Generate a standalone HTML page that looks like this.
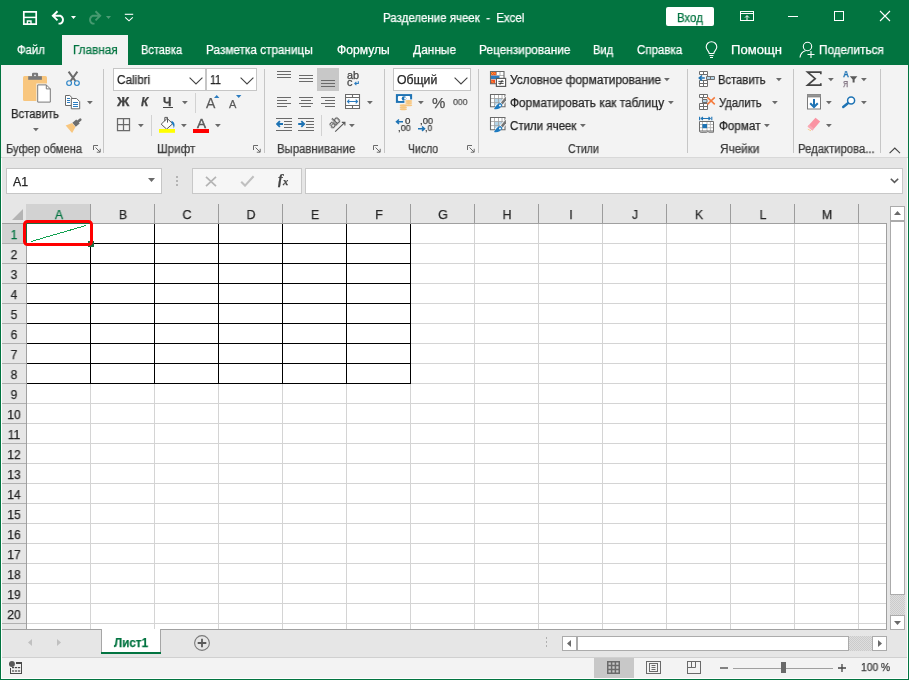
<!DOCTYPE html>
<html lang="ru"><head><meta charset="utf-8"><title>Excel</title><style>
html,body{margin:0;padding:0;}
body{width:909px;height:680px;overflow:hidden;position:relative;background:#e6e6e6;font-family:"Liberation Sans",sans-serif;}
div,svg,span{position:absolute;}
span{-webkit-text-stroke:0.25px;will-change:transform;z-index:2;white-space:pre;line-height:1;transform-origin:0 0;display:block;}
</style></head><body>
<div style="left:0px;top:0px;width:909px;height:680px;background:#027440;"></div>
<div style="left:1px;top:65px;width:907px;height:614px;background:#ffffff;"></div>
<div style="left:1px;top:65px;width:907px;height:92px;background:#f3f3f3;"></div>
<div style="left:1px;top:157px;width:907px;height:1px;background:#d8d8d8;"></div>
<div style="left:62px;top:35px;width:66px;height:30px;background:#f3f3f3;"></div>
<div style="left:2px;top:158px;width:905px;height:499px;background:#e6e6e6;"></div>
<span style="left:383.04px;top:12px;font-size:12px;color:#ffffff;transform:scaleX(0.9575);">Разделение ячеек  -  Excel</span>
<div style="left:666px;top:7px;width:48px;height:19px;background:#ffffff;border-radius:2px;"></div>
<span style="left:676.75px;top:12px;font-size:12px;color:#027440;transform:scaleX(0.9481);">Вход</span>
<span style="left:17.20px;top:44px;font-size:12px;color:#fff;transform:scaleX(0.9448);">Файл</span>
<span style="left:72.72px;top:44px;font-size:12px;color:#027440;transform:scaleX(0.9773);">Главная</span>
<span style="left:141.28px;top:44px;font-size:12px;color:#fff;transform:scaleX(0.9205);">Вставка</span>
<span style="left:205.72px;top:44px;font-size:12px;color:#fff;transform:scaleX(0.9806);">Разметка страницы</span>
<span style="left:336.90px;top:44px;font-size:12px;color:#fff;transform:scaleX(1.0096);">Формулы</span>
<span style="left:413.40px;top:44px;font-size:12px;color:#fff;transform:scaleX(0.9930);">Данные</span>
<span style="left:478.81px;top:44px;font-size:12px;color:#fff;transform:scaleX(0.9859);">Рецензирование</span>
<span style="left:592.97px;top:44px;font-size:12px;color:#fff;transform:scaleX(0.9286);">Вид</span>
<span style="left:636.60px;top:44px;font-size:12px;color:#fff;transform:scaleX(0.9583);">Справка</span>
<span style="left:730.61px;top:44px;font-size:12px;color:#fff;transform:scaleX(1.0889);">Помощн</span>
<span style="left:819.02px;top:44px;font-size:12px;color:#fff;transform:scaleX(0.9769);">Поделиться</span>
<span style="left:5.87px;top:143px;font-size:12px;color:#3c3c3c;transform:scaleX(0.9333);">Буфер обмена</span>
<span style="left:157.03px;top:143px;font-size:12px;color:#3c3c3c;transform:scaleX(0.9667);">Шрифт</span>
<span style="left:276.95px;top:143px;font-size:12px;color:#3c3c3c;transform:scaleX(0.9463);">Выравнивание</span>
<span style="left:408.30px;top:143px;font-size:12px;color:#3c3c3c;transform:scaleX(0.8735);">Число</span>
<span style="left:568.10px;top:143px;font-size:12px;color:#3c3c3c;transform:scaleX(0.8971);">Стили</span>
<span style="left:720.40px;top:143px;font-size:12px;color:#3c3c3c;transform:scaleX(0.9800);">Ячейки</span>
<span style="left:797.96px;top:143px;font-size:12px;color:#3c3c3c;transform:scaleX(0.9413);">Редактирова...</span>
<div style="left:103px;top:69px;width:1px;height:84px;background:#c6c6c6;"></div>
<div style="left:264px;top:69px;width:1px;height:84px;background:#c6c6c6;"></div>
<div style="left:384px;top:69px;width:1px;height:84px;background:#c6c6c6;"></div>
<div style="left:478px;top:69px;width:1px;height:84px;background:#c6c6c6;"></div>
<div style="left:687px;top:69px;width:1px;height:84px;background:#c6c6c6;"></div>
<div style="left:793px;top:69px;width:1px;height:84px;background:#c6c6c6;"></div>
<div style="left:880px;top:69px;width:1px;height:84px;background:#c6c6c6;"></div>
<span style="left:10.86px;top:108px;font-size:12px;color:#262626;transform:scaleX(0.9440);">Вставить</span>
<span style="left:116.60px;top:74px;font-size:12px;color:#262626;transform:scaleX(0.9765);">Calibri</span>
<span style="left:210.00px;top:74px;font-size:12px;color:#262626;transform:scaleX(0.88);">11</span>
<span style="left:397.00px;top:74px;font-size:12px;color:#262626;transform:scaleX(1.0205);">Общий</span>
<span style="left:509.90px;top:74px;font-size:12px;color:#262626;transform:scaleX(0.9895);">Условное форматирование</span>
<span style="left:509.90px;top:97px;font-size:12px;color:#262626;transform:scaleX(0.9866);">Форматировать как таблицу</span>
<span style="left:509.90px;top:120px;font-size:12px;color:#262626;transform:scaleX(0.9586);">Стили ячеек</span>
<span style="left:718.16px;top:74px;font-size:12px;color:#262626;transform:scaleX(0.9360);">Вставить</span>
<span style="left:719.10px;top:97px;font-size:12px;color:#262626;transform:scaleX(0.9304);">Удалить</span>
<span style="left:719.10px;top:120px;font-size:12px;color:#262626;transform:scaleX(0.9721);">Формат</span>
<div style="left:6px;top:168px;width:156px;height:26px;background:#c6c6c6;"></div>
<div style="left:7px;top:169px;width:154px;height:24px;background:#ffffff;"></div>
<span style="left:13.30px;top:176px;font-size:12px;color:#262626;transform:scaleX(1.0333);">A1</span>
<div style="left:192px;top:168px;width:110px;height:26px;background:#c8c8c8;"></div>
<div style="left:193px;top:169px;width:108px;height:24px;background:#f6f6f6;"></div>
<div style="left:305px;top:168px;width:598px;height:26px;background:#c8c8c8;"></div>
<div style="left:306px;top:169px;width:596px;height:24px;background:#ffffff;"></div>
<div style="left:2px;top:204px;width:885px;height:20px;background:#e6e6e6;"></div>
<div style="left:26px;top:204px;width:65px;height:20px;background:#d2d2d2;"></div>
<div style="left:2px;top:224px;width:24px;height:405px;background:#e6e6e6;"></div>
<div style="left:2px;top:224px;width:24px;height:20px;background:#d2d2d2;"></div>
<div style="left:27px;top:224px;width:859px;height:405px;background:#ffffff;"></div>
<div style="left:26px;top:224px;width:1px;height:405px;background:#d4d4d4;"></div>
<div style="left:90px;top:224px;width:1px;height:405px;background:#d4d4d4;"></div>
<div style="left:90px;top:204px;width:1px;height:20px;background:#9c9c9c;"></div>
<div style="left:154px;top:224px;width:1px;height:405px;background:#d4d4d4;"></div>
<div style="left:154px;top:204px;width:1px;height:20px;background:#9c9c9c;"></div>
<div style="left:218px;top:224px;width:1px;height:405px;background:#d4d4d4;"></div>
<div style="left:218px;top:204px;width:1px;height:20px;background:#9c9c9c;"></div>
<div style="left:282px;top:224px;width:1px;height:405px;background:#d4d4d4;"></div>
<div style="left:282px;top:204px;width:1px;height:20px;background:#9c9c9c;"></div>
<div style="left:346px;top:224px;width:1px;height:405px;background:#d4d4d4;"></div>
<div style="left:346px;top:204px;width:1px;height:20px;background:#9c9c9c;"></div>
<div style="left:410px;top:224px;width:1px;height:405px;background:#d4d4d4;"></div>
<div style="left:410px;top:204px;width:1px;height:20px;background:#9c9c9c;"></div>
<div style="left:474px;top:224px;width:1px;height:405px;background:#d4d4d4;"></div>
<div style="left:474px;top:204px;width:1px;height:20px;background:#9c9c9c;"></div>
<div style="left:538px;top:224px;width:1px;height:405px;background:#d4d4d4;"></div>
<div style="left:538px;top:204px;width:1px;height:20px;background:#9c9c9c;"></div>
<div style="left:602px;top:224px;width:1px;height:405px;background:#d4d4d4;"></div>
<div style="left:602px;top:204px;width:1px;height:20px;background:#9c9c9c;"></div>
<div style="left:666px;top:224px;width:1px;height:405px;background:#d4d4d4;"></div>
<div style="left:666px;top:204px;width:1px;height:20px;background:#9c9c9c;"></div>
<div style="left:730px;top:224px;width:1px;height:405px;background:#d4d4d4;"></div>
<div style="left:730px;top:204px;width:1px;height:20px;background:#9c9c9c;"></div>
<div style="left:794px;top:224px;width:1px;height:405px;background:#d4d4d4;"></div>
<div style="left:794px;top:204px;width:1px;height:20px;background:#9c9c9c;"></div>
<div style="left:858px;top:224px;width:1px;height:405px;background:#d4d4d4;"></div>
<div style="left:858px;top:204px;width:1px;height:20px;background:#9c9c9c;"></div>
<div style="left:27px;top:223px;width:859px;height:1px;background:#d4d4d4;"></div>
<div style="left:2px;top:223px;width:24px;height:1px;background:#b0b0b0;"></div>
<div style="left:27px;top:243px;width:859px;height:1px;background:#d4d4d4;"></div>
<div style="left:2px;top:243px;width:24px;height:1px;background:#b0b0b0;"></div>
<div style="left:27px;top:263px;width:859px;height:1px;background:#d4d4d4;"></div>
<div style="left:2px;top:263px;width:24px;height:1px;background:#b0b0b0;"></div>
<div style="left:27px;top:283px;width:859px;height:1px;background:#d4d4d4;"></div>
<div style="left:2px;top:283px;width:24px;height:1px;background:#b0b0b0;"></div>
<div style="left:27px;top:303px;width:859px;height:1px;background:#d4d4d4;"></div>
<div style="left:2px;top:303px;width:24px;height:1px;background:#b0b0b0;"></div>
<div style="left:27px;top:323px;width:859px;height:1px;background:#d4d4d4;"></div>
<div style="left:2px;top:323px;width:24px;height:1px;background:#b0b0b0;"></div>
<div style="left:27px;top:343px;width:859px;height:1px;background:#d4d4d4;"></div>
<div style="left:2px;top:343px;width:24px;height:1px;background:#b0b0b0;"></div>
<div style="left:27px;top:363px;width:859px;height:1px;background:#d4d4d4;"></div>
<div style="left:2px;top:363px;width:24px;height:1px;background:#b0b0b0;"></div>
<div style="left:27px;top:383px;width:859px;height:1px;background:#d4d4d4;"></div>
<div style="left:2px;top:383px;width:24px;height:1px;background:#b0b0b0;"></div>
<div style="left:27px;top:403px;width:859px;height:1px;background:#d4d4d4;"></div>
<div style="left:2px;top:403px;width:24px;height:1px;background:#b0b0b0;"></div>
<div style="left:27px;top:423px;width:859px;height:1px;background:#d4d4d4;"></div>
<div style="left:2px;top:423px;width:24px;height:1px;background:#b0b0b0;"></div>
<div style="left:27px;top:443px;width:859px;height:1px;background:#d4d4d4;"></div>
<div style="left:2px;top:443px;width:24px;height:1px;background:#b0b0b0;"></div>
<div style="left:27px;top:463px;width:859px;height:1px;background:#d4d4d4;"></div>
<div style="left:2px;top:463px;width:24px;height:1px;background:#b0b0b0;"></div>
<div style="left:27px;top:483px;width:859px;height:1px;background:#d4d4d4;"></div>
<div style="left:2px;top:483px;width:24px;height:1px;background:#b0b0b0;"></div>
<div style="left:27px;top:503px;width:859px;height:1px;background:#d4d4d4;"></div>
<div style="left:2px;top:503px;width:24px;height:1px;background:#b0b0b0;"></div>
<div style="left:27px;top:523px;width:859px;height:1px;background:#d4d4d4;"></div>
<div style="left:2px;top:523px;width:24px;height:1px;background:#b0b0b0;"></div>
<div style="left:27px;top:543px;width:859px;height:1px;background:#d4d4d4;"></div>
<div style="left:2px;top:543px;width:24px;height:1px;background:#b0b0b0;"></div>
<div style="left:27px;top:563px;width:859px;height:1px;background:#d4d4d4;"></div>
<div style="left:2px;top:563px;width:24px;height:1px;background:#b0b0b0;"></div>
<div style="left:27px;top:583px;width:859px;height:1px;background:#d4d4d4;"></div>
<div style="left:2px;top:583px;width:24px;height:1px;background:#b0b0b0;"></div>
<div style="left:27px;top:603px;width:859px;height:1px;background:#d4d4d4;"></div>
<div style="left:2px;top:603px;width:24px;height:1px;background:#b0b0b0;"></div>
<div style="left:27px;top:623px;width:859px;height:1px;background:#d4d4d4;"></div>
<div style="left:2px;top:623px;width:24px;height:1px;background:#b0b0b0;"></div>
<div style="left:26px;top:224px;width:1px;height:405px;background:#a0a0a0;"></div>
<div style="left:2px;top:223px;width:885px;height:1px;background:#a0a0a0;"></div>
<div style="left:886px;top:223px;width:1px;height:407px;background:#a0a0a0;"></div>
<div style="left:2px;top:629px;width:885px;height:1px;background:#a0a0a0;"></div>
<span style="left:59.00px;top:208px;font-size:13.5px;color:#027440;transform-origin:50% 0;transform:translateX(-50%) scaleX(0.93);">A</span>
<span style="left:123.00px;top:208px;font-size:13.5px;color:#262626;transform-origin:50% 0;transform:translateX(-50%) scaleX(0.93);">B</span>
<span style="left:187.00px;top:208px;font-size:13.5px;color:#262626;transform-origin:50% 0;transform:translateX(-50%) scaleX(0.93);">C</span>
<span style="left:251.00px;top:208px;font-size:13.5px;color:#262626;transform-origin:50% 0;transform:translateX(-50%) scaleX(0.93);">D</span>
<span style="left:315.00px;top:208px;font-size:13.5px;color:#262626;transform-origin:50% 0;transform:translateX(-50%) scaleX(0.93);">E</span>
<span style="left:379.00px;top:208px;font-size:13.5px;color:#262626;transform-origin:50% 0;transform:translateX(-50%) scaleX(0.93);">F</span>
<span style="left:443.00px;top:208px;font-size:13.5px;color:#262626;transform-origin:50% 0;transform:translateX(-50%) scaleX(0.93);">G</span>
<span style="left:507.00px;top:208px;font-size:13.5px;color:#262626;transform-origin:50% 0;transform:translateX(-50%) scaleX(0.93);">H</span>
<span style="left:571.00px;top:208px;font-size:13.5px;color:#262626;transform-origin:50% 0;transform:translateX(-50%) scaleX(0.93);">I</span>
<span style="left:635.00px;top:208px;font-size:13.5px;color:#262626;transform-origin:50% 0;transform:translateX(-50%) scaleX(0.93);">J</span>
<span style="left:699.00px;top:208px;font-size:13.5px;color:#262626;transform-origin:50% 0;transform:translateX(-50%) scaleX(0.93);">K</span>
<span style="left:763.00px;top:208px;font-size:13.5px;color:#262626;transform-origin:50% 0;transform:translateX(-50%) scaleX(0.93);">L</span>
<span style="left:827.00px;top:208px;font-size:13.5px;color:#262626;transform-origin:50% 0;transform:translateX(-50%) scaleX(0.93);">M</span>
<span style="left:13.70px;top:228px;font-size:13px;color:#027440;transform-origin:50% 0;transform:translateX(-50%) scaleX(0.93);">1</span>
<span style="left:13.70px;top:248px;font-size:13px;color:#262626;transform-origin:50% 0;transform:translateX(-50%) scaleX(0.93);">2</span>
<span style="left:13.70px;top:268px;font-size:13px;color:#262626;transform-origin:50% 0;transform:translateX(-50%) scaleX(0.93);">3</span>
<span style="left:13.70px;top:288px;font-size:13px;color:#262626;transform-origin:50% 0;transform:translateX(-50%) scaleX(0.93);">4</span>
<span style="left:13.70px;top:308px;font-size:13px;color:#262626;transform-origin:50% 0;transform:translateX(-50%) scaleX(0.93);">5</span>
<span style="left:13.70px;top:328px;font-size:13px;color:#262626;transform-origin:50% 0;transform:translateX(-50%) scaleX(0.93);">6</span>
<span style="left:13.70px;top:348px;font-size:13px;color:#262626;transform-origin:50% 0;transform:translateX(-50%) scaleX(0.93);">7</span>
<span style="left:13.70px;top:368px;font-size:13px;color:#262626;transform-origin:50% 0;transform:translateX(-50%) scaleX(0.93);">8</span>
<span style="left:13.70px;top:388px;font-size:13px;color:#262626;transform-origin:50% 0;transform:translateX(-50%) scaleX(0.93);">9</span>
<span style="left:13.70px;top:408px;font-size:13px;color:#262626;transform-origin:50% 0;transform:translateX(-50%) scaleX(0.93);">10</span>
<span style="left:13.70px;top:428px;font-size:13px;color:#262626;transform-origin:50% 0;transform:translateX(-50%) scaleX(0.93);">11</span>
<span style="left:13.70px;top:448px;font-size:13px;color:#262626;transform-origin:50% 0;transform:translateX(-50%) scaleX(0.93);">12</span>
<span style="left:13.70px;top:468px;font-size:13px;color:#262626;transform-origin:50% 0;transform:translateX(-50%) scaleX(0.93);">13</span>
<span style="left:13.70px;top:488px;font-size:13px;color:#262626;transform-origin:50% 0;transform:translateX(-50%) scaleX(0.93);">14</span>
<span style="left:13.70px;top:508px;font-size:13px;color:#262626;transform-origin:50% 0;transform:translateX(-50%) scaleX(0.93);">15</span>
<span style="left:13.70px;top:528px;font-size:13px;color:#262626;transform-origin:50% 0;transform:translateX(-50%) scaleX(0.93);">16</span>
<span style="left:13.70px;top:548px;font-size:13px;color:#262626;transform-origin:50% 0;transform:translateX(-50%) scaleX(0.93);">17</span>
<span style="left:13.70px;top:568px;font-size:13px;color:#262626;transform-origin:50% 0;transform:translateX(-50%) scaleX(0.93);">18</span>
<span style="left:13.70px;top:588px;font-size:13px;color:#262626;transform-origin:50% 0;transform:translateX(-50%) scaleX(0.93);">19</span>
<span style="left:13.70px;top:608px;font-size:13px;color:#262626;transform-origin:50% 0;transform:translateX(-50%) scaleX(0.93);">20</span>
<div style="left:90px;top:224px;width:1px;height:160px;background:#000;"></div>
<div style="left:154px;top:224px;width:1px;height:160px;background:#000;"></div>
<div style="left:218px;top:224px;width:1px;height:160px;background:#000;"></div>
<div style="left:282px;top:224px;width:1px;height:160px;background:#000;"></div>
<div style="left:346px;top:224px;width:1px;height:160px;background:#000;"></div>
<div style="left:410px;top:224px;width:1px;height:160px;background:#000;"></div>
<div style="left:27px;top:243px;width:384px;height:1px;background:#000;"></div>
<div style="left:27px;top:263px;width:384px;height:1px;background:#000;"></div>
<div style="left:27px;top:283px;width:384px;height:1px;background:#000;"></div>
<div style="left:27px;top:303px;width:384px;height:1px;background:#000;"></div>
<div style="left:27px;top:323px;width:384px;height:1px;background:#000;"></div>
<div style="left:27px;top:343px;width:384px;height:1px;background:#000;"></div>
<div style="left:27px;top:363px;width:384px;height:1px;background:#000;"></div>
<div style="left:27px;top:383px;width:384px;height:1px;background:#000;"></div>
<svg style="left:11px;top:208px;" width="13" height="13" viewBox="0 0 13 13"><path d="M12 1V12H1Z" fill="#b4b4b4"/></svg>
<svg style="left:27px;top:224px;" width="63" height="19" viewBox="0 0 63 19"><path d="M4 17.5L59 1.5" stroke="#12a150" stroke-width="1" fill="none" shape-rendering="crispEdges"/></svg>
<div style="left:26px;top:223px;width:65px;height:1px;background:#1b6e43;"></div>
<div style="left:26px;top:223px;width:1px;height:21px;background:#1b6e43;"></div>
<div style="left:88px;top:241px;width:6px;height:6px;background:#1b6e43;"></div>
<div style="left:23px;top:220px;width:64px;height:20px;border:3px solid #ff0000;border-radius:4.5px;"></div>
<div style="left:2px;top:630px;width:905px;height:27px;background:#e6e6e6;"></div>
<div style="left:2px;top:657px;width:905px;height:1px;background:#d0d0d0;"></div>
<div style="left:2px;top:658px;width:905px;height:20px;background:#f3f3f3;"></div>
<div style="left:101px;top:629px;width:60px;height:23px;background:#a6a6a6;"></div>
<div style="left:102px;top:629px;width:58px;height:23px;background:#ffffff;"></div>
<div style="left:101px;top:652px;width:60px;height:2px;background:#027440;"></div>
<span style="left:113.80px;top:636px;font-size:13.5px;color:#027440;font-weight:bold;transform:scaleX(0.8625);">Лист1</span>
<svg style="left:28px;top:639px;" width="4" height="7" viewBox="0 0 4 7"><path d="M4 0L0 3.5L4 7Z" fill="#c0c0c0"/></svg>
<svg style="left:57px;top:639px;" width="4" height="7" viewBox="0 0 4 7"><path d="M0 0L4 3.5L0 7Z" fill="#c0c0c0"/></svg>
<svg style="left:193px;top:634px;" width="18" height="18" viewBox="0 0 18 18"><circle cx="9" cy="9" r="7.4" fill="none" stroke="#7a7a7a" stroke-width="1.1"/><path d="M4.7 9H13.3M9 4.7V13.3" stroke="#5a5a5a" stroke-width="1.8"/></svg>
<svg style="left:9px;top:661px;" width="14" height="14" viewBox="0 0 14 14"><circle cx="2.9" cy="3.1" r="3" fill="#5a5a5a"/><g fill="#4a4a4a"><rect x="7" y="1" width="6" height="2"/><rect x="12" y="1" width="1" height="12"/><rect x="1" y="12" width="12" height="1"/><rect x="1" y="7" width="1" height="6"/><rect x="3" y="6" width="2.2" height="1.2"/><rect x="6" y="6" width="2.2" height="1.2"/><rect x="9" y="6" width="2.2" height="1.2"/><rect x="3" y="9.4" width="2.2" height="1.2"/><rect x="6" y="9.4" width="2.2" height="1.2"/><rect x="9" y="9.4" width="2.2" height="1.2"/></g></svg>
<div style="left:546px;top:637px;width:1px;height:2px;background:#b0b0b0;"></div>
<div style="left:546px;top:641px;width:1px;height:2px;background:#b0b0b0;"></div>
<div style="left:546px;top:645px;width:1px;height:2px;background:#b0b0b0;"></div>
<div style="left:562px;top:636px;width:15px;height:15px;background:#ababab;"></div>
<div style="left:563px;top:637px;width:13px;height:13px;background:#ffffff;"></div>
<div style="left:577px;top:636px;width:272px;height:15px;background:#ababab;"></div>
<div style="left:578px;top:637px;width:270px;height:13px;background:#ffffff;"></div>
<div style="left:849px;top:636px;width:23px;height:15px;background:#d3d3d3;background-image:conic-gradient(#cbcbcb 25%,#dedede 0 50%,#cbcbcb 0 75%,#dedede 0);background-size:2px 2px;"></div>
<div style="left:872px;top:636px;width:15px;height:15px;background:#ababab;"></div>
<div style="left:873px;top:637px;width:13px;height:13px;background:#ffffff;"></div>
<svg style="left:567px;top:640px;" width="4" height="7" viewBox="0 0 4 7"><path d="M4 0L0 3.5L4 7Z" fill="#6a6a6a"/></svg>
<svg style="left:878px;top:640px;" width="4" height="7" viewBox="0 0 4 7"><path d="M0 0L4 3.5L0 7Z" fill="#6a6a6a"/></svg>
<div style="left:890px;top:206px;width:15px;height:15px;background:#ababab;"></div>
<div style="left:891px;top:207px;width:13px;height:13px;background:#ffffff;"></div>
<div style="left:890px;top:221px;width:15px;height:374px;background:#ababab;"></div>
<div style="left:891px;top:222px;width:13px;height:372px;background:#ffffff;"></div>
<div style="left:890px;top:595px;width:15px;height:20px;background:#d3d3d3;background-image:conic-gradient(#cbcbcb 25%,#dedede 0 50%,#cbcbcb 0 75%,#dedede 0);background-size:2px 2px;"></div>
<div style="left:890px;top:615px;width:15px;height:15px;background:#ababab;"></div>
<div style="left:891px;top:616px;width:13px;height:13px;background:#ffffff;"></div>
<svg style="left:894px;top:211px;" width="7" height="4" viewBox="0 0 7 4"><path d="M0 4L3.5 0L7 4Z" fill="#6a6a6a"/></svg>
<svg style="left:894px;top:621px;" width="7" height="4" viewBox="0 0 7 4"><path d="M0 0L3.5 4L7 0Z" fill="#6a6a6a"/></svg>
<div style="left:594px;top:658px;width:40px;height:20px;background:#c8c8c8;"></div>
<svg style="left:607px;top:661px;" width="13" height="13" viewBox="0 0 13 13"><path d="M0.75 0.75H12.25V12.25H0.75ZM0.75 4.6H12.25M0.75 8.4H12.25M4.6 0.75V12.25M8.4 0.75V12.25" fill="none" stroke="#6a6a6a" stroke-width="1.5"/></svg>
<svg style="left:646px;top:661px;" width="15" height="13" viewBox="0 0 15 13"><rect x="0.5" y="0.5" width="14" height="12" fill="none" stroke="#6a6a6a"/><rect x="3.5" y="2.5" width="8" height="8" fill="none" stroke="#6a6a6a"/><path d="M5.5 4.5H9.5M5.5 6.5H9.5M5.5 8.5H9.5" stroke="#6a6a6a" stroke-width="1"/></svg>
<svg style="left:687px;top:661px;" width="14" height="13" viewBox="0 0 14 13"><rect x="0.5" y="0.5" width="13" height="12" fill="none" stroke="#6a6a6a"/><path d="M0.5 6.5H8.5V0.5M4.5 0.5V6.5" fill="none" stroke="#6a6a6a"/></svg>
<svg style="left:719px;top:663px;" width="10" height="10" viewBox="0 0 10 10"><path d="M1 5H9" stroke="#444" stroke-width="1.3" fill="none"/></svg>
<div style="left:733px;top:668px;width:100px;height:1px;background:#a0a0a0;"></div>
<div style="left:781px;top:662px;width:5px;height:11px;background:#6a6a6a;"></div>
<svg style="left:837px;top:663px;" width="10" height="10" viewBox="0 0 10 10"><path d="M1 5H9M5 1V9" stroke="#444" stroke-width="1.3" fill="none"/></svg>
<span style="left:860.50px;top:662px;font-size:10.7px;color:#3a3a3a;transform:scaleX(0.9600);">100 %</span>
<svg style="left:22px;top:10px;" width="16" height="16" viewBox="0 0 16 16"><path d="M1.8 1.8H14.2V14.2H1.8Z" fill="none" stroke="#fff" stroke-width="1.7"/><path d="M1.8 7.4H14.2" stroke="#fff" stroke-width="1.5"/><path d="M5.4 14.2V11H9V14.2" fill="none" stroke="#fff" stroke-width="1.4"/></svg>
<svg style="left:51px;top:10px;" width="16" height="15" viewBox="0 0 16 15"><path d="M6.5 1.2 L1.8 5.8 L6.5 10.4 M1.8 5.8 H9.5 A4.3 4.3 0 0 1 9.5 13.6 H7.5" fill="none" stroke="#fff" stroke-width="1.9"/></svg>
<svg style="left:71px;top:16px;" width="5" height="3" viewBox="0 0 5 3"><path d="M0 0H5L2.5 3Z" fill="#fff"/></svg>
<svg style="left:86px;top:10px;" width="16" height="15" viewBox="0 0 16 15"><path d="M9.5 1.2 L14.2 5.8 L9.5 10.4 M14.2 5.8 H6.5 A4.3 4.3 0 0 0 6.5 13.6 H8.5" fill="none" stroke="#469a70" stroke-width="1.9"/></svg>
<svg style="left:106px;top:16px;" width="5" height="3" viewBox="0 0 5 3"><path d="M0 0H5L2.5 3Z" fill="#4f9c76"/></svg>
<svg style="left:124px;top:13px;" width="10" height="9" viewBox="0 0 10 9"><path d="M0.8 1.3H9.2" stroke="#fff" stroke-width="1.1"/><path d="M1.2 4.3L5 7.8L8.8 4.3" fill="none" stroke="#fff" stroke-width="1.1"/></svg>
<svg style="left:740px;top:11px;" width="14" height="10" viewBox="0 0 14 10"><rect x="0.5" y="0.5" width="13" height="9" fill="none" stroke="#fff"/><path d="M0.5 2.5H13.5" stroke="#fff"/><path d="M7 9.5V4.8M5 6.6L7 4.6L9 6.6" fill="none" stroke="#fff"/></svg>
<div style="left:788px;top:16px;width:10px;height:1px;background:#fff;"></div>
<div style="left:834px;top:11px;width:10px;height:10px;border:1px solid #fff;box-sizing:border-box;"></div>
<svg style="left:879px;top:10px;" width="12" height="12" viewBox="0 0 12 12"><path d="M1 1L11 11M11 1L1 11" stroke="#fff" stroke-width="1.1"/></svg>
<svg style="left:705px;top:41px;" width="13" height="18" viewBox="0 0 13 18"><path d="M4.2 12.5 C4.2 10 1.2 9 1.2 6 A5.3 5.3 0 0 1 11.8 6 C11.8 9 8.8 10 8.8 12.5 Z" fill="none" stroke="#fff" stroke-width="1.1"/><path d="M4.5 14.5H8.5M5 16.5H8" stroke="#fff" stroke-width="1.1"/></svg>
<svg style="left:799px;top:41px;" width="17" height="18" viewBox="0 0 17 18"><circle cx="8.5" cy="5.5" r="4.2" fill="none" stroke="#fff" stroke-width="1.1"/><path d="M1 16.5 C1.5 12.5 4 10.5 6.5 9.8" fill="none" stroke="#fff" stroke-width="1.1"/><path d="M8.5 13.5H15.5M12 10V17" stroke="#fff" stroke-width="1.1"/></svg>
<svg style="left:22px;top:72px;" width="30" height="32" viewBox="0 0 30 32"><rect x="1" y="4" width="24" height="25" rx="1.5" fill="#f8c67e"/><rect x="6.2" y="4.2" width="13.7" height="3.6" fill="#797979"/><rect x="10" y="0.8" width="6.1" height="4.5" rx="1.2" fill="#797979"/><circle cx="13" cy="3.3" r="0.9" fill="#f3f3f3"/><path d="M14.4 11.6H25L29.4 16V31.2H14.4Z" fill="#f3f3f3"/><path d="M15.7 12.9H24.3L28.3 16.9V30.1H15.7Z" fill="#fff" stroke="#7a7a7a" stroke-width="1"/><path d="M24.3 12.9V16.9H28.3" fill="none" stroke="#7a7a7a" stroke-width="1"/></svg>
<svg style="left:32.6px;top:128px;" width="6" height="4" viewBox="0 0 6 4"><path d="M0 0H5.8L2.9 3.3Z" fill="#6a6a6a"/></svg>
<svg style="left:65px;top:71px;" width="16" height="16" viewBox="0 0 16 16"><path d="M3.6 0.6L10.4 10M12.4 0.6L5.6 10" stroke="#6a6a6a" stroke-width="2" fill="none"/><circle cx="4.1" cy="12.1" r="2.4" fill="#f3f3f3" stroke="#2e86c8" stroke-width="1.15"/><circle cx="11.9" cy="12.1" r="2.4" fill="#f3f3f3" stroke="#2e86c8" stroke-width="1.15"/></svg>
<svg style="left:64px;top:94px;" width="17" height="16" viewBox="0 0 17 16"><path d="M1.5 1.5H5.8L8 3.7V11.5H1.5Z" fill="#fff" stroke="#6a6a6a"/><path d="M3 4.5H6M3 6.5H6M3 8.5H6" stroke="#2b7cc0"/><path d="M7.3 4.5H12.6L15.7 7.6V14.8H7.3Z" fill="#fff" stroke="#6a6a6a"/><path d="M9 8.5H14M9 10.5H14M9 12.5H14" stroke="#2b7cc0"/></svg>
<svg style="left:86.6px;top:101px;" width="6" height="4" viewBox="0 0 6 4"><path d="M0 0H5.8L2.9 3.3Z" fill="#6a6a6a"/></svg>
<svg style="left:64px;top:118px;" width="18" height="17" viewBox="0 0 18 17"><path d="M8.1 5.1L11.5 9.1L8.1 15.1L1.7 7.5Z" fill="#f8c67e"/><path d="M15.7 5.5L12.3 1.5L8.4 4.8L11.8 8.8Z" fill="#6e6e6e"/><path d="M13.2 4.2L16.2 1.7" stroke="#6e6e6e" stroke-width="2.6" stroke-linecap="round"/></svg>
<div style="left:113px;top:68px;width:93px;height:23px;background:#c6c6c6;"></div>
<div style="left:114px;top:69px;width:91px;height:21px;background:#ffffff;"></div>
<div style="left:206px;top:68px;width:51px;height:23px;background:#c6c6c6;"></div>
<div style="left:207px;top:69px;width:49px;height:21px;background:#ffffff;"></div>
<svg style="left:189px;top:76.5px;" width="14" height="8" viewBox="0 0 14 8"><path d="M0.6 0.6L7.0 7L13.4 0.6" fill="none" stroke="#444444" stroke-width="1.1"/></svg>
<svg style="left:239.5px;top:76.5px;" width="14" height="8" viewBox="0 0 14 8"><path d="M0.6 0.6L7.0 7L13.4 0.6" fill="none" stroke="#444444" stroke-width="1.1"/></svg>
<span style="left:117.30px;top:96px;font-size:12px;color:#444444;font-weight:bold;transform:scaleX(1.14);">Ж</span>
<span style="left:140.90px;top:96px;font-size:12px;color:#444444;font-weight:bold;font-style:italic;">К</span>
<span style="left:163.30px;top:96px;font-size:12px;color:#444444;font-weight:bold;">Ч</span>
<div style="left:163px;top:107px;width:10px;height:1px;background:#444444;"></div>
<svg style="left:181.6px;top:101px;" width="6" height="4" viewBox="0 0 6 4"><path d="M0 0H5.8L2.9 3.3Z" fill="#6a6a6a"/></svg>
<div style="left:195px;top:93px;width:1px;height:20px;background:#d2d2d2;"></div>
<span style="left:205.60px;top:96px;font-size:14px;color:#5a5a5a;">A</span>
<svg style="left:214px;top:95px;" width="6" height="3" viewBox="0 0 6 3"><path d="M0 3H5.4L2.7 0Z" fill="#2b7cc0"/></svg>
<span style="left:228.60px;top:99px;font-size:11px;color:#5a5a5a;">A</span>
<svg style="left:236px;top:95px;" width="6" height="3" viewBox="0 0 6 3"><path d="M0 0H5.4L2.7 3Z" fill="#2b7cc0"/></svg>
<svg style="left:116px;top:117px;" width="15" height="15" viewBox="0 0 15 15"><path d="M1.5 1.5H13.5V13.5H1.5ZM7.5 1.5V13.5M1.5 7.5H13.5" fill="none" stroke="#6a6a6a" stroke-width="1.25"/></svg>
<svg style="left:137.6px;top:124px;" width="6" height="4" viewBox="0 0 6 4"><path d="M0 0H5.8L2.9 3.3Z" fill="#6a6a6a"/></svg>
<div style="left:151px;top:115px;width:1px;height:21px;background:#d2d2d2;"></div>
<svg style="left:158px;top:116px;" width="18" height="17" viewBox="0 0 18 17"><path d="M9.1 2.4L14.7 7.7L8.6 13.1L3.2 8.2Z" fill="#fff" stroke="#5a5a5a" stroke-width="1"/><path d="M6.8 5.2V1.4H9.5V6.6" fill="none" stroke="#5a5a5a" stroke-width="1"/><path d="M13.4 4.8C16.6 5.8 17.4 9 15.7 12.6C15.7 10.2 15.2 8.6 13.6 7.4Z" fill="#1e7bc0"/><rect x="1" y="13" width="16" height="3.8" fill="#ffff00"/></svg>
<svg style="left:180.6px;top:124px;" width="6" height="4" viewBox="0 0 6 4"><path d="M0 0H5.8L2.9 3.3Z" fill="#6a6a6a"/></svg>
<span style="left:196.60px;top:117px;font-size:13.5px;color:#5a5a5a;-webkit-text-stroke:0.5px;">A</span>
<div style="left:193px;top:129px;width:16px;height:4px;background:#ff0000;"></div>
<svg style="left:214.6px;top:124px;" width="6" height="4" viewBox="0 0 6 4"><path d="M0 0H5.8L2.9 3.3Z" fill="#6a6a6a"/></svg>
<div style="left:277px;top:71px;width:14px;height:1px;background:#6a6a6a;"></div>
<div style="left:277px;top:74px;width:14px;height:1px;background:#6a6a6a;"></div>
<div style="left:277px;top:77px;width:14px;height:1px;background:#6a6a6a;"></div>
<div style="left:299px;top:75px;width:14px;height:1px;background:#6a6a6a;"></div>
<div style="left:299px;top:78px;width:14px;height:1px;background:#6a6a6a;"></div>
<div style="left:299px;top:81px;width:14px;height:1px;background:#6a6a6a;"></div>
<div style="left:317px;top:68px;width:22px;height:23px;background:#c8c8c8;"></div>
<div style="left:321px;top:80px;width:14px;height:1px;background:#6a6a6a;"></div>
<div style="left:321px;top:83px;width:14px;height:1px;background:#6a6a6a;"></div>
<div style="left:321px;top:86px;width:14px;height:1px;background:#6a6a6a;"></div>
<span style="left:347.10px;top:70px;font-size:10.5px;color:#444444;transform:scaleX(1.0333);">ab</span>
<span style="left:347.10px;top:77px;font-size:10.5px;color:#444444;transform:scaleX(1.0400);">c</span>
<svg style="left:353.6px;top:80.8px;" width="5" height="5" viewBox="0 0 5 5"><path d="M4.3 0.3V2.5H1M2.4 0.9L0.8 2.5L2.4 4.1" fill="none" stroke="#2b7cc0" stroke-width="1.1"/></svg>
<div style="left:277px;top:97px;width:14px;height:1px;background:#6a6a6a;"></div>
<div style="left:277px;top:100px;width:10px;height:1px;background:#6a6a6a;"></div>
<div style="left:277px;top:103px;width:14px;height:1px;background:#6a6a6a;"></div>
<div style="left:277px;top:106px;width:10px;height:1px;background:#6a6a6a;"></div>
<div style="left:299.0px;top:97px;width:14px;height:1px;background:#6a6a6a;"></div>
<div style="left:301.0px;top:100px;width:10px;height:1px;background:#6a6a6a;"></div>
<div style="left:299.0px;top:103px;width:14px;height:1px;background:#6a6a6a;"></div>
<div style="left:301.0px;top:106px;width:10px;height:1px;background:#6a6a6a;"></div>
<div style="left:321px;top:97px;width:14px;height:1px;background:#6a6a6a;"></div>
<div style="left:325px;top:100px;width:10px;height:1px;background:#6a6a6a;"></div>
<div style="left:321px;top:103px;width:14px;height:1px;background:#6a6a6a;"></div>
<div style="left:325px;top:106px;width:10px;height:1px;background:#6a6a6a;"></div>
<svg style="left:345px;top:94px;" width="16" height="15" viewBox="0 0 16 15"><path d="M0.5 0.5H14.5V14.5H0.5ZM0.5 3.5H14.5M0.5 11.5H14.5M7.5 0.5V3.5M7.5 11.5V14.5" fill="#fff" stroke="#6a6a6a" stroke-width="1.1"/><path d="M2.5 7.5H12.5M4.3 5.7L2.5 7.5L4.3 9.3M10.7 5.7L12.5 7.5L10.7 9.3" fill="none" stroke="#2b7cc0" stroke-width="1.1"/></svg>
<svg style="left:366.6px;top:101px;" width="6" height="4" viewBox="0 0 6 4"><path d="M0 0H5.8L2.9 3.3Z" fill="#6a6a6a"/></svg>
<div style="left:276px;top:118px;width:16px;height:1px;background:#6a6a6a;"></div>
<div style="left:276px;top:130px;width:16px;height:1px;background:#6a6a6a;"></div>
<div style="left:284px;top:121px;width:8px;height:1px;background:#6a6a6a;"></div>
<div style="left:284px;top:124px;width:8px;height:1px;background:#6a6a6a;"></div>
<div style="left:284px;top:127px;width:8px;height:1px;background:#6a6a6a;"></div>
<svg style="left:276px;top:120px;" width="8" height="8" viewBox="0 0 8 8"><path d="M7 4H1.4M3.9 1.1L1 4L3.9 6.9" fill="none" stroke="#1e73b4" stroke-width="1.8"/></svg>
<div style="left:298px;top:118px;width:16px;height:1px;background:#6a6a6a;"></div>
<div style="left:298px;top:130px;width:16px;height:1px;background:#6a6a6a;"></div>
<div style="left:306px;top:121px;width:8px;height:1px;background:#6a6a6a;"></div>
<div style="left:306px;top:124px;width:8px;height:1px;background:#6a6a6a;"></div>
<div style="left:306px;top:127px;width:8px;height:1px;background:#6a6a6a;"></div>
<svg style="left:298px;top:120px;" width="8" height="8" viewBox="0 0 8 8"><path d="M0.2 4H5.8M3.3 1.1L6.2 4L3.3 6.9" fill="none" stroke="#1e73b4" stroke-width="1.8"/></svg>
<div style="left:321px;top:115px;width:1px;height:21px;background:#d2d2d2;"></div>
<span style="left:332.60px;top:120px;font-size:11.5px;color:#505050;transform-origin:0 0.8465em;transform:rotate(-45deg);letter-spacing:-0.3px;">ab</span>
<svg style="left:333px;top:120px;" width="14" height="13" viewBox="0 0 14 13"><path d="M2.2 11.6L11.6 2.6M8.8 2.4H11.9V5.5" fill="none" stroke="#5a5a5a" stroke-width="1.15"/></svg>
<svg style="left:348.6px;top:124px;" width="6" height="4" viewBox="0 0 6 4"><path d="M0 0H5.8L2.9 3.3Z" fill="#6a6a6a"/></svg>
<svg style="left:93px;top:145px;" width="8" height="8" viewBox="0 0 8 8"><path d="M0.5 5V0.5H5" fill="none" stroke="#6a6a6a" stroke-width="1"/><path d="M2.5 2.5L7 7M7.2 3.8V7.2H3.8" fill="none" stroke="#6a6a6a" stroke-width="1"/></svg>
<svg style="left:253px;top:145px;" width="8" height="8" viewBox="0 0 8 8"><path d="M0.5 5V0.5H5" fill="none" stroke="#6a6a6a" stroke-width="1"/><path d="M2.5 2.5L7 7M7.2 3.8V7.2H3.8" fill="none" stroke="#6a6a6a" stroke-width="1"/></svg>
<svg style="left:373px;top:145px;" width="8" height="8" viewBox="0 0 8 8"><path d="M0.5 5V0.5H5" fill="none" stroke="#6a6a6a" stroke-width="1"/><path d="M2.5 2.5L7 7M7.2 3.8V7.2H3.8" fill="none" stroke="#6a6a6a" stroke-width="1"/></svg>
<svg style="left:467px;top:145px;" width="8" height="8" viewBox="0 0 8 8"><path d="M0.5 5V0.5H5" fill="none" stroke="#6a6a6a" stroke-width="1"/><path d="M2.5 2.5L7 7M7.2 3.8V7.2H3.8" fill="none" stroke="#6a6a6a" stroke-width="1"/></svg>
<div style="left:393px;top:68px;width:78px;height:23px;background:#c6c6c6;"></div>
<div style="left:394px;top:69px;width:76px;height:21px;background:#ffffff;"></div>
<svg style="left:453.5px;top:76.5px;" width="14" height="8" viewBox="0 0 14 8"><path d="M0.6 0.6L7.0 7L13.4 0.6" fill="none" stroke="#444444" stroke-width="1.1"/></svg>
<svg style="left:395px;top:93px;" width="18" height="18" viewBox="0 0 18 18"><rect x="0.9" y="1.1" width="16.2" height="8.8" fill="#1e73b4"/><rect x="2.9" y="3" width="12.2" height="5" rx="1" fill="#fff"/><circle cx="9" cy="5.5" r="2.3" fill="#1e73b4"/><circle cx="10.1" cy="5.3" r="1" fill="#fff"/><rect x="9.4" y="6.4" width="8.6" height="7.6" fill="#f3f3f3"/><g fill="#f8c67e"><ellipse cx="13.7" cy="8" rx="3.5" ry="1.05"/><ellipse cx="13.7" cy="10.1" rx="3.5" ry="1.05"/><ellipse cx="13.7" cy="12.2" rx="3.5" ry="1.05"/><ellipse cx="8.3" cy="12.4" rx="3.6" ry="1.05"/><ellipse cx="8.3" cy="14.4" rx="3.6" ry="1.05"/><ellipse cx="8.3" cy="16.3" rx="3.6" ry="1.05"/></g></svg>
<svg style="left:417.6px;top:101px;" width="6" height="4" viewBox="0 0 6 4"><path d="M0 0H5.8L2.9 3.3Z" fill="#6a6a6a"/></svg>
<span style="left:432.30px;top:95px;font-size:15px;color:#505050;">%</span>
<span style="left:452.90px;top:97px;font-size:9.4px;color:#505050;transform:scaleX(0.9250);">000</span>
<svg style="left:395px;top:118px;" width="9" height="8" viewBox="0 0 9 8"><path d="M8 3.7H1.8M4 1.5L1.5 3.7L4 5.9" fill="none" stroke="#1e73b4" stroke-width="1.5"/></svg>
<span style="left:405.40px;top:116px;font-size:9.6px;color:#3a3a3a;transform:scaleX(1.0200);">0</span>
<span style="left:398.10px;top:123px;font-size:9.6px;color:#3a3a3a;transform:scaleX(0.9538);">,00</span>
<span style="left:419.80px;top:116px;font-size:9.6px;color:#3a3a3a;transform:scaleX(0.9769);">,00</span>
<svg style="left:417px;top:125px;" width="9" height="8" viewBox="0 0 9 8"><path d="M1 3.7H7.2M5 1.5L7.5 3.7L5 5.9" fill="none" stroke="#1e73b4" stroke-width="1.5"/></svg>
<span style="left:425.30px;top:123px;font-size:9.6px;color:#3a3a3a;transform:scaleX(0.9000);">,0</span>
<svg style="left:489px;top:70px;" width="18" height="18" viewBox="0 0 18 18"><rect x="1.5" y="1.5" width="13.5" height="12.3" fill="#fff"/><rect x="1.5" y="1.5" width="6" height="4" fill="#f04e23"/><path d="M2.2 2.2L4.4 4.4M4.6 2.2L6.8 4.4M2.2 4.4L3 5.2" stroke="#fbbf3c" stroke-width="0.9"/><rect x="1.5" y="5.6" width="9" height="3.6" fill="#2b7cc0"/><rect x="1.5" y="9.6" width="4.6" height="4.2" fill="#f04e23"/><path d="M2.2 10.6L4.4 12.8" stroke="#fbbf3c" stroke-width="0.9"/><path d="M7.5 1.5V5.5M11 1.5V5.5M7.5 5.5H15" fill="none" stroke="#a0a0a0" stroke-width="0.8"/><path d="M1.5 1.5H15V13.8H1.5Z" fill="none" stroke="#6a6a6a" stroke-width="1.1"/><rect x="7.4" y="8.4" width="9.2" height="8" fill="#fff" stroke="#5a5a5a" stroke-width="1.2"/><path d="M9.4 11.4H14.6M9.4 13.4H14.6M13.3 10L10.9 14.8" stroke="#333" stroke-width="0.9" fill="none"/></svg>
<svg style="left:489px;top:93px;" width="18" height="18" viewBox="0 0 18 18"><rect x="1.5" y="1.5" width="14.5" height="12.3" fill="#fff"/><rect x="5.5" y="5.5" width="8" height="6.5" fill="#b5d5e8"/><path d="M1.5 5.5H16M1.5 9.6H16M5.5 1.5V13.8M9.5 1.5V13.8M13 1.5V13.8" fill="none" stroke="#a0a0a0" stroke-width="0.8"/><path d="M1.5 1.5H16V13.8H1.5Z" fill="none" stroke="#6a6a6a" stroke-width="1.1"/><path d="M8 10L13 17.8H4Z" fill="#f3f3f3"/><path d="M10.8 9.2L17.6 1.8V8.4L13.2 13Z" fill="#f3f3f3"/><path d="M12 9.6L16.8 3.4L17 7.2L13.6 11.6Z" fill="#757575"/><path d="M11.6 10C9.6 10.2 7.4 11.6 5 16C8.4 16.8 11.8 15.4 13.4 12Z" fill="#1e7bc0"/><circle cx="11" cy="12.6" r="1" fill="#fff"/></svg>
<svg style="left:489px;top:116px;" width="18" height="18" viewBox="0 0 18 18"><rect x="1.5" y="1.5" width="14.5" height="12.3" fill="#fff"/><rect x="5.5" y="5.5" width="8" height="6.5" fill="#b5d5e8"/><path d="M1.5 5.5H16M1.5 9.6H16M5.5 1.5V13.8M9.5 1.5V13.8M13 1.5V13.8" fill="none" stroke="#a0a0a0" stroke-width="0.8"/><path d="M1.5 1.5H16V13.8H1.5Z" fill="none" stroke="#6a6a6a" stroke-width="1.1"/><path d="M8 10L13 17.8H4Z" fill="#f3f3f3"/><path d="M10.8 9.2L17.6 1.8V8.4L13.2 13Z" fill="#f3f3f3"/><path d="M12 9.6L16.8 3.4L17 7.2L13.6 11.6Z" fill="#757575"/><path d="M11.6 10C9.6 10.2 7.4 11.6 5 16C8.4 16.8 11.8 15.4 13.4 12Z" fill="#1e7bc0"/><circle cx="11" cy="12.6" r="1" fill="#fff"/></svg>
<svg style="left:663.6px;top:78px;" width="6" height="4" viewBox="0 0 6 4"><path d="M0 0H5.8L2.9 3.3Z" fill="#6a6a6a"/></svg>
<svg style="left:667.6px;top:101px;" width="6" height="4" viewBox="0 0 6 4"><path d="M0 0H5.8L2.9 3.3Z" fill="#6a6a6a"/></svg>
<svg style="left:579.6px;top:124px;" width="6" height="4" viewBox="0 0 6 4"><path d="M0 0H5.8L2.9 3.3Z" fill="#6a6a6a"/></svg>
<svg style="left:698px;top:70px;" width="18" height="18" viewBox="0 0 18 18"><path d="M1.5 1.5H9.5V4.5H1.5ZM5.5 1.5V4.5" fill="#fff" stroke="#6e6e6e" stroke-width="1"/><path d="M8.5 6.5H16.5V9.5H8.5ZM12.5 6.5V9.5" fill="#b5d5e8" stroke="#6e6e6e" stroke-width="1"/><path d="M1.5 10.5H9.5V16.5H1.5ZM5.5 10.5V16.5M1.5 13.5H9.5" fill="#fff" stroke="#6e6e6e" stroke-width="1"/><path d="M9.5 4.5V6.5M9.5 9.5V10.5" stroke="#6e6e6e" stroke-width="1"/><path d="M6.8 8H1.6M4 5.5L1.3 8L4 10.5" fill="none" stroke="#1e73b4" stroke-width="1.6"/></svg>
<svg style="left:775.6px;top:78px;" width="6" height="4" viewBox="0 0 6 4"><path d="M0 0H5.8L2.9 3.3Z" fill="#6a6a6a"/></svg>
<svg style="left:698px;top:93px;" width="18" height="18" viewBox="0 0 18 18"><path d="M1.5 1.5H9.5V4.5H1.5ZM5.5 1.5V4.5" fill="#fff" stroke="#6e6e6e" stroke-width="1"/><path d="M4.5 6.5H9V9.5H4.5Z" fill="#b5d5e8" stroke="#6e6e6e" stroke-width="1"/><path d="M1.5 10.5H9.5V16.5H1.5ZM5.5 10.5V16.5M1.5 13.5H9.5" fill="#fff" stroke="#6e6e6e" stroke-width="1"/><path d="M4.5 4.5V6.5M4.5 9.5V10.5" stroke="#6e6e6e" stroke-width="1"/><path d="M9.4 4.4L16.8 11.4M16.8 4.4L9.4 11.4" fill="none" stroke="#f47a3c" stroke-width="1.5"/></svg>
<svg style="left:771.6px;top:101px;" width="6" height="4" viewBox="0 0 6 4"><path d="M0 0H5.8L2.9 3.3Z" fill="#6a6a6a"/></svg>
<svg style="left:698px;top:116px;" width="18" height="18" viewBox="0 0 18 18"><rect x="1.5" y="5.5" width="14" height="9.5" fill="#fff"/><path d="M1.5 8.5H15.5M1.5 11.7H15.5M4.5 5.5V15M9 5.5V15M12.4 5.5V15" fill="none" stroke="#b4b4b4" stroke-width="0.9"/><path d="M1.5 5.5H15.5V15H1.5Z" fill="none" stroke="#6e6e6e" stroke-width="1"/><path d="M1.5 15C1.5 16.7 3.5 16.6 5 16.4H8.6C9.4 15.5 10.2 15.5 11 16.3H15.5V15" fill="none" stroke="#6e6e6e" stroke-width="0.9"/><rect x="4.4" y="8" width="4.6" height="4.2" fill="#1e73b4"/><path d="M1.6 0.8V4.2M13.8 0.8V4.2M3.2 2.5H12.2M4.9 1L3.2 2.5L4.9 4M10.5 1L12.2 2.5L10.5 4" fill="none" stroke="#1e73b4" stroke-width="1.1"/></svg>
<svg style="left:763.6px;top:124px;" width="6" height="4" viewBox="0 0 6 4"><path d="M0 0H5.8L2.9 3.3Z" fill="#6a6a6a"/></svg>
<svg style="left:805px;top:70px;" width="18" height="18" viewBox="0 0 18 18"><path d="M15.8 4.2V2.2H2.6L10.2 8.7L2.6 15.2H15.8V13.2" fill="none" stroke="#444" stroke-width="1.7" stroke-linejoin="miter"/></svg>
<svg style="left:827.6px;top:78px;" width="6" height="4" viewBox="0 0 6 4"><path d="M0 0H5.8L2.9 3.3Z" fill="#6a6a6a"/></svg>
<span style="left:842.50px;top:69px;font-size:9.8px;color:#1e73b4;font-weight:bold;transform:scaleX(0.8429);">A</span>
<span style="left:843.10px;top:80px;font-size:8.6px;color:#7a6a7a;transform:scaleX(0.8167);">Я</span>
<svg style="left:849px;top:75px;" width="9" height="9" viewBox="0 0 9 9"><path d="M0.8 1.2H8.4L5.6 4.4V7.6H3.6V4.4Z" fill="#5a5a5a"/></svg>
<svg style="left:860.6px;top:78px;" width="6" height="4" viewBox="0 0 6 4"><path d="M0 0H5.8L2.9 3.3Z" fill="#6a6a6a"/></svg>
<svg style="left:806px;top:93px;" width="16" height="17" viewBox="0 0 16 17"><rect x="1.5" y="1.5" width="13" height="14.5" fill="#fff" stroke="#7a7a7a" stroke-width="1"/><rect x="1" y="1" width="14" height="3.4" fill="#8a8a8a"/><path d="M2.5 2.7H13.5" stroke="#b0b0b0" stroke-width="0.8" stroke-dasharray="1 1"/><path d="M8 6V14M4.2 10.2L8 14L11.8 10.2" fill="none" stroke="#1e73b4" stroke-width="2"/></svg>
<svg style="left:825.6px;top:101px;" width="6" height="4" viewBox="0 0 6 4"><path d="M0 0H5.8L2.9 3.3Z" fill="#6a6a6a"/></svg>
<svg style="left:841px;top:95px;" width="16" height="14" viewBox="0 0 16 14"><circle cx="10.1" cy="5.4" r="3.5" fill="#fff" stroke="#1e73b4" stroke-width="1.5"/><path d="M6.9 8.3L2.2 12" stroke="#1e73b4" stroke-width="2.4" stroke-linecap="round"/></svg>
<svg style="left:860.6px;top:101px;" width="6" height="4" viewBox="0 0 6 4"><path d="M0 0H5.8L2.9 3.3Z" fill="#6a6a6a"/></svg>
<svg style="left:806px;top:116px;" width="16" height="16" viewBox="0 0 16 16"><path d="M9.5 1.8L14.2 5.6L6.4 14.4L1.6 10.6Z" fill="#fa93a3"/><path d="M3.2 8.8L7.9 12.6L6.4 14.4L1.6 10.6Z" fill="#f9a9b5"/><path d="M1.8 13.2L5 14.8" stroke="#f8c67e" stroke-width="0.8"/></svg>
<svg style="left:825.6px;top:124px;" width="6" height="4" viewBox="0 0 6 4"><path d="M0 0H5.8L2.9 3.3Z" fill="#6a6a6a"/></svg>
<svg style="left:889px;top:147px;" width="12" height="7" viewBox="0 0 12 7"><path d="M0.6 6.2L5.8 1L11 6.2" fill="none" stroke="#444" stroke-width="1.1"/></svg>
<svg style="left:148px;top:178px;" width="7" height="4" viewBox="0 0 7 4"><path d="M0 0H7L3.5 4Z" fill="#6a6a6a"/></svg>
<div style="left:176px;top:176px;width:2px;height:2px;background:#b4b4b4;"></div>
<div style="left:176px;top:180px;width:2px;height:2px;background:#b4b4b4;"></div>
<div style="left:176px;top:184px;width:2px;height:2px;background:#b4b4b4;"></div>
<svg style="left:205px;top:176px;" width="12" height="11" viewBox="0 0 12 11"><path d="M1 0.8L11 10.2M11 0.8L1 10.2" stroke="#b4b4b4" stroke-width="1.7" fill="none"/></svg>
<svg style="left:240px;top:175px;" width="15" height="12" viewBox="0 0 15 12"><path d="M1.2 6.8L5 10.6L13.6 1.2" stroke="#c0c0c0" stroke-width="2.1" fill="none"/></svg>
<span style="left:277.60px;top:173px;font-size:14px;color:#444444;font-family:'Liberation Serif',serif;font-style:italic;font-weight:bold;">f</span>
<span style="left:282.60px;top:177px;font-size:10.5px;color:#444444;font-family:'Liberation Serif',serif;font-style:italic;font-weight:bold;">x</span>
<svg style="left:890px;top:178px;" width="9" height="6" viewBox="0 0 9 6"><path d="M0.8 0.8L4.5 4.4L8.2 0.8" stroke="#5a5a5a" stroke-width="1.6" fill="none"/></svg>
</body></html>
